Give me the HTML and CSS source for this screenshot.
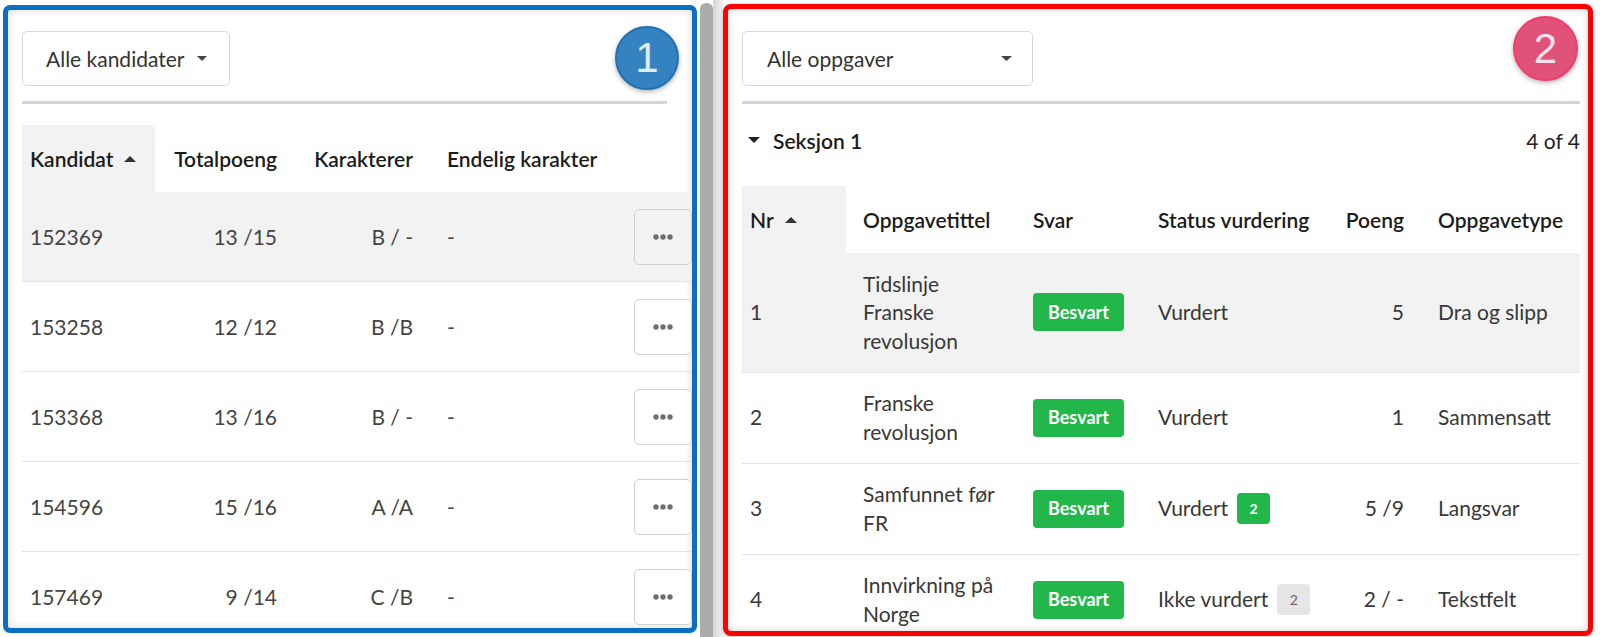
FILE: index.html
```html
<!DOCTYPE html>
<html lang="no">
<head>
<meta charset="utf-8">
<title>Vurdering</title>
<link rel="stylesheet" href="styles.css">
</head>
<body>
<div class="screen">
  <section class="frame frame-blue">
    <div class="panel">
      <div class="toolbar toolbar-left">
        <div class="dropdown dd-left"><span>Alle kandidater</span><svg class="caret" width="10" height="5" viewBox="0 0 10 5"><polygon points="0,0 10,0 5,5"/></svg></div>
      </div>
      <div class="ltable">
        <div class="lrow lhead">
          <div class="c1 sorted">Kandidat<svg class="sort" width="12" height="6" viewBox="0 0 12 6"><polygon points="0,6 12,6 6,0"/></svg></div>
          <div class="c2">Totalpoeng</div>
          <div class="c3">Karakterer</div>
          <div class="c4">Endelig karakter</div>
          <div class="c5"></div>
        </div>
        <div class="lrow lbody active">
          <div class="c1">152369</div><div class="c2">13 /15</div><div class="c3">B / -</div><div class="c4">-</div>
          <div class="c5"><button class="more"><svg width="20" height="6" viewBox="0 0 20 6"><circle cx="3" cy="3" r="2.7"/><circle cx="10" cy="3" r="2.7"/><circle cx="17" cy="3" r="2.7"/></svg></button></div>
        </div>
        <div class="lrow lbody">
          <div class="c1">153258</div><div class="c2">12 /12</div><div class="c3">B /B</div><div class="c4">-</div>
          <div class="c5"><button class="more"><svg width="20" height="6" viewBox="0 0 20 6"><circle cx="3" cy="3" r="2.7"/><circle cx="10" cy="3" r="2.7"/><circle cx="17" cy="3" r="2.7"/></svg></button></div>
        </div>
        <div class="lrow lbody">
          <div class="c1">153368</div><div class="c2">13 /16</div><div class="c3">B / -</div><div class="c4">-</div>
          <div class="c5"><button class="more"><svg width="20" height="6" viewBox="0 0 20 6"><circle cx="3" cy="3" r="2.7"/><circle cx="10" cy="3" r="2.7"/><circle cx="17" cy="3" r="2.7"/></svg></button></div>
        </div>
        <div class="lrow lbody">
          <div class="c1">154596</div><div class="c2">15 /16</div><div class="c3">A /A</div><div class="c4">-</div>
          <div class="c5"><button class="more"><svg width="20" height="6" viewBox="0 0 20 6"><circle cx="3" cy="3" r="2.7"/><circle cx="10" cy="3" r="2.7"/><circle cx="17" cy="3" r="2.7"/></svg></button></div>
        </div>
        <div class="lrow lbody">
          <div class="c1">157469</div><div class="c2">9 /14</div><div class="c3">C /B</div><div class="c4">-</div>
          <div class="c5"><button class="more"><svg width="20" height="6" viewBox="0 0 20 6"><circle cx="3" cy="3" r="2.7"/><circle cx="10" cy="3" r="2.7"/><circle cx="17" cy="3" r="2.7"/></svg></button></div>
        </div>
      </div>
    </div>
    <div class="num-badge num-blue">1</div>
  </section>

  <div class="splitter"></div>
  <div class="splitter-shade"></div>

  <section class="frame frame-red">
    <div class="panel panel-right">
      <div class="toolbar">
        <div class="dropdown dd-right"><span>Alle oppgaver</span><svg class="caret" width="11" height="5" viewBox="0 0 11 5"><polygon points="0,0 11,0 5.5,5"/></svg></div>
      </div>
      <div class="section-row">
        <div class="section-title"><svg class="sec-caret" width="12" height="6" viewBox="0 0 12 6"><polygon points="0,0 12,0 6,6"/></svg>Seksjon 1</div>
        <div class="section-count">4 of 4</div>
      </div>
      <div class="rtable">
        <div class="rrow rhead">
          <div class="r1 sorted">Nr<svg class="sort" width="12" height="6" viewBox="0 0 12 6"><polygon points="0,6 12,6 6,0"/></svg></div>
          <div class="r2">Oppgavetittel</div>
          <div class="r3">Svar</div>
          <div class="r4">Status vurdering</div>
          <div class="r5">Poeng</div>
          <div class="r6">Oppgavetype</div>
        </div>
        <div class="rrow rbody active">
          <div class="r1">1</div>
          <div class="r2">Tidslinje<br>Franske revolusjon</div>
          <div class="r3"><span class="answered">Besvart</span></div>
          <div class="r4">Vurdert</div>
          <div class="r5">5</div>
          <div class="r6">Dra og slipp</div>
        </div>
        <div class="rrow rbody">
          <div class="r1">2</div>
          <div class="r2">Franske revolusjon</div>
          <div class="r3"><span class="answered">Besvart</span></div>
          <div class="r4">Vurdert</div>
          <div class="r5">1</div>
          <div class="r6">Sammensatt</div>
        </div>
        <div class="rrow rbody">
          <div class="r1">3</div>
          <div class="r2">Samfunnet før FR</div>
          <div class="r3"><span class="answered">Besvart</span></div>
          <div class="r4">Vurdert<span class="count count-green">2</span></div>
          <div class="r5">5 /9</div>
          <div class="r6">Langsvar</div>
        </div>
        <div class="rrow rbody">
          <div class="r1">4</div>
          <div class="r2">Innvirkning på Norge</div>
          <div class="r3"><span class="answered">Besvart</span></div>
          <div class="r4">Ikke vurdert<span class="count count-gray">2</span></div>
          <div class="r5">2 / -</div>
          <div class="r6">Tekstfelt</div>
        </div>
      </div>
    </div>
    <div class="num-badge num-pink">2</div>
  </section>
</div>
</body>
</html>
```

FILE: styles.css
```css
* { box-sizing: border-box; }

html, body {
  margin: 0;
  padding: 0;
  background: #ffffff;
}

body {
  width: 1600px;
  height: 637px;
  overflow: hidden;
  font-family: Lato, "Noto Sans", "Liberation Sans", sans-serif;
  font-size: 21px;
  color: #3a3a3a;
}

.screen {
  display: flex;
  align-items: flex-start;
  height: 637px;
}

.frame {
  position: relative;
  overflow: hidden;
  background: #ffffff;
}

.frame-blue {
  width: 694px;
  height: 628px;
  margin: 5px 0 0 3px;
  border: 5px solid #0a6fc0;
  border-radius: 7px;
}

.frame-red {
  width: 870px;
  height: 632px;
  margin-top: 4px;
  border: 5px solid #ff0000;
  border-radius: 8px;
  box-shadow: 0 1px 4px rgba(0, 0, 0, 0.25);
}

.splitter {
  width: 13px;
  height: 634px;
  margin: 3px 0 0 3px;
  background: #ababab;
  border-radius: 6px 6px 0 0;
}

.splitter-shade {
  width: 10px;
  height: 637px;
  background: linear-gradient(90deg, #d6d6d6 0%, #e4e4e4 50%, #f4f4f4 100%);
}

.panel {
  height: 100%;
  padding: 21px 0 0 14px;
  box-shadow: inset 0 0 8px rgba(0, 0, 0, 0.16);
}

.panel-right {
  padding: 22px 8px 0 14px;
}

/* toolbar + dropdown */
.toolbar {
  display: flex;
  padding-bottom: 15px;
  border-bottom: 3px solid #d6d6d6;
}

.toolbar-left {
  margin-right: 25px;
}

.dropdown {
  display: flex;
  align-items: center;
  height: 55px;
  padding: 0 22px 0 23px;
  border: 1px solid #d8d8d8;
  border-radius: 5px;
  font-size: 21px;
  color: #333;
  background: #fff;
}

.dd-left { width: 208px; }
.dd-right { width: 291px; padding-left: 24px; padding-right: 20px; }

.caret {
  margin-left: auto;
  fill: #444;
}

/* left table */
.ltable {
  margin-top: 21px;
  width: 670px;
}

.lrow {
  display: grid;
  grid-template-columns: 133px 130px 136px 213px 58px;
  align-items: center;
}

.lhead {
  height: 67px;
  font-weight: 600;
  color: #1c1c1c;
}

.lhead > div {
  height: 100%;
  display: flex;
  align-items: center;
}

.lhead .c2, .lhead .c3 { justify-content: flex-end; }

.lbody {
  height: 90px;
  border-bottom: 1px solid #e4e4e4;
  color: #444;
}

.active { background: #f2f2f2; }

.sorted { background: #f2f2f2; }

.sort {
  margin-left: 11px;
  fill: #333;
}

.c1 { padding-left: 8px; }
.c2, .c3 { text-align: right; padding-right: 8px; }
.c4 { padding-left: 26px; }

.more {
  display: flex;
  align-items: center;
  justify-content: center;
  width: 58px;
  height: 56px;
  padding: 0;
  border: 1px solid #d0d0d0;
  border-radius: 5px;
  background: #ffffff;
}

.active .more { background: transparent; }

.more svg { fill: #6e6e6e; }

/* section row */
.section-row {
  display: flex;
  align-items: center;
  justify-content: space-between;
  height: 72px;
}

.section-title {
  display: flex;
  align-items: center;
  padding-left: 6px;
  font-weight: 600;
  color: #1c1c1c;
}

.sec-caret {
  margin-right: 13px;
  fill: #222;
}

.section-count { color: #222; }

/* right table */
.rtable {
  margin-top: 10px;
}

.rrow {
  display: grid;
  grid-template-columns: 104px 179px 125px 162px 100px 168px;
  align-items: center;
}

.rhead {
  height: 67px;
  font-weight: 600;
  color: #1c1c1c;
}

.rhead > div {
  height: 100%;
  display: flex;
  align-items: center;
}

.rhead .r5 { justify-content: flex-end; }

.rbody {
  padding: 16.5px 0;
  border-bottom: 1px solid #e4e4e4;
  line-height: 28.5px;
  color: #383838;
}

.r1 { padding-left: 8px; }
.r2 { padding-left: 17px; padding-right: 14px; }
.r3 { padding-left: 8px; }
.r4 { padding-left: 8px; display: flex; align-items: center; }
.r5 { text-align: right; padding-right: 8px; }
.r6 { padding-left: 26px; }

.answered {
  display: inline-flex;
  align-items: center;
  justify-content: center;
  width: 91px;
  height: 38px;
  border-radius: 4px;
  background: #21b74a;
  color: #ffffff;
  font-weight: 700;
  font-size: 18px;
  vertical-align: middle;
}

.count {
  display: inline-flex;
  align-items: center;
  justify-content: center;
  width: 33px;
  height: 31px;
  margin-left: 9px;
  border-radius: 4px;
  font-size: 14px;
  line-height: 1;
}

.count-green {
  background: #21b74a;
  color: #fff;
  font-weight: 700;
}

.count-gray {
  background: #e6e6e6;
  color: #666;
}

/* annotation badges */
.num-badge {
  position: absolute;
  display: flex;
  align-items: center;
  justify-content: center;
  width: 64px;
  height: 64px;
  border-radius: 50%;
  font-family: "Liberation Sans", Arial, sans-serif;
  font-size: 42px;
  line-height: 1;
  box-shadow: 0 2px 5px rgba(0, 0, 0, 0.3);
}

.num-blue {
  top: 16px;
  right: 13px;
  background: #3582c1;
  border: 2px solid #2470b0;
  color: #e1ebf5;
}

.num-pink {
  top: 7px;
  right: 10px;
  width: 65px;
  height: 65px;
  background: #e1527b;
  border: 2px solid #f03c6c;
  color: #fbe1e9;
}
```
